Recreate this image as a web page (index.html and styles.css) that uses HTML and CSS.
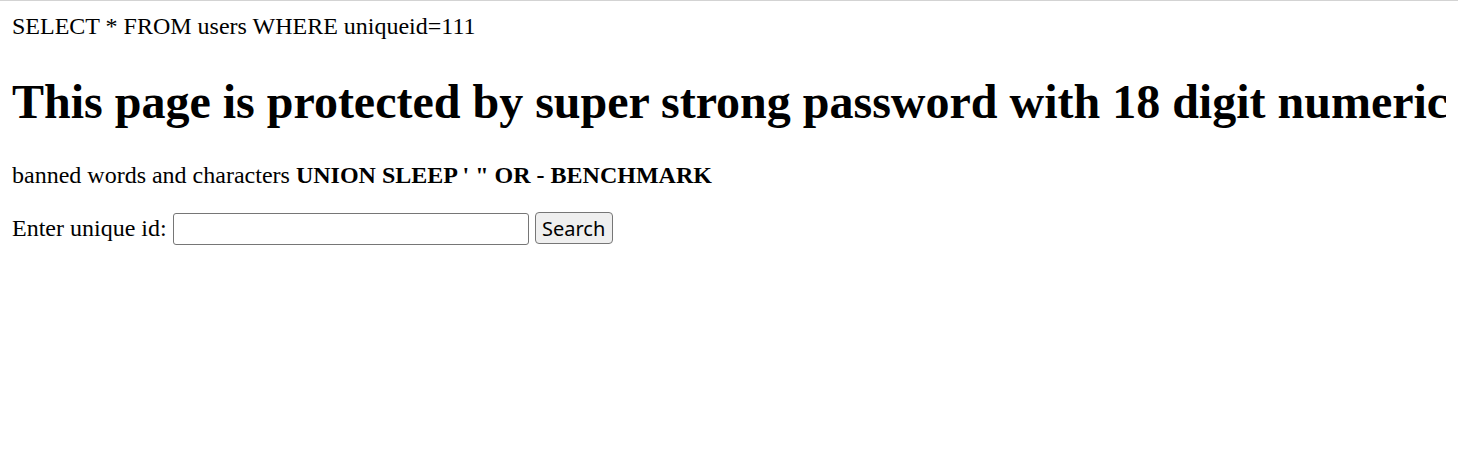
FILE: index.html
```html
<!DOCTYPE html>
<html>
<head>
<meta charset="utf-8">
<link rel="stylesheet" href="styles.css">
</head>
<body class="page">
SELECT * FROM users WHERE uniqueid=111
<h1 class="title">This page is protected by super strong password with 18 digit numeric</h1>
<p class="banned">banned words and characters <b>UNION SLEEP ' " OR - BENCHMARK</b></p>
<form class="search">
<label class="label">Enter unique id: </label><input class="field" type="text" name="uniqueid"> <button class="btn" type="submit">Search</button>
</form>
</body>
</html>
```
FILE: styles.css
```css
html {
  border-top: 1px solid #d3d3d3;
  background: #fff;
}
.page {
  margin: 12px;
  font-family: "Liberation Serif", "Times New Roman", serif;
  font-size: 24px;
  color: #000;
}
.title {
  font-size: 48px;
  font-weight: bold;
  margin: 34px 0 33px;
  white-space: nowrap;
}
.banned {
  margin: 24px 0 23px;
}
.search {
  margin: 0;
}
.field {
  box-sizing: border-box;
  width: 356px;
  height: 32px;
  border: 1px solid #767676;
  border-radius: 3px;
  padding: 1px 3px;
  font-size: 20px;
  vertical-align: baseline;
}
.btn {
  box-sizing: border-box;
  width: 78px;
  height: 32px;
  border: 1px solid #767676;
  border-radius: 4px;
  background: #efefef;
  font-family: "Noto Sans", "Open Sans", sans-serif;
  font-size: 20px;
  color: #000;
  padding: 0 6px;
  margin-left: 0;
}
```
